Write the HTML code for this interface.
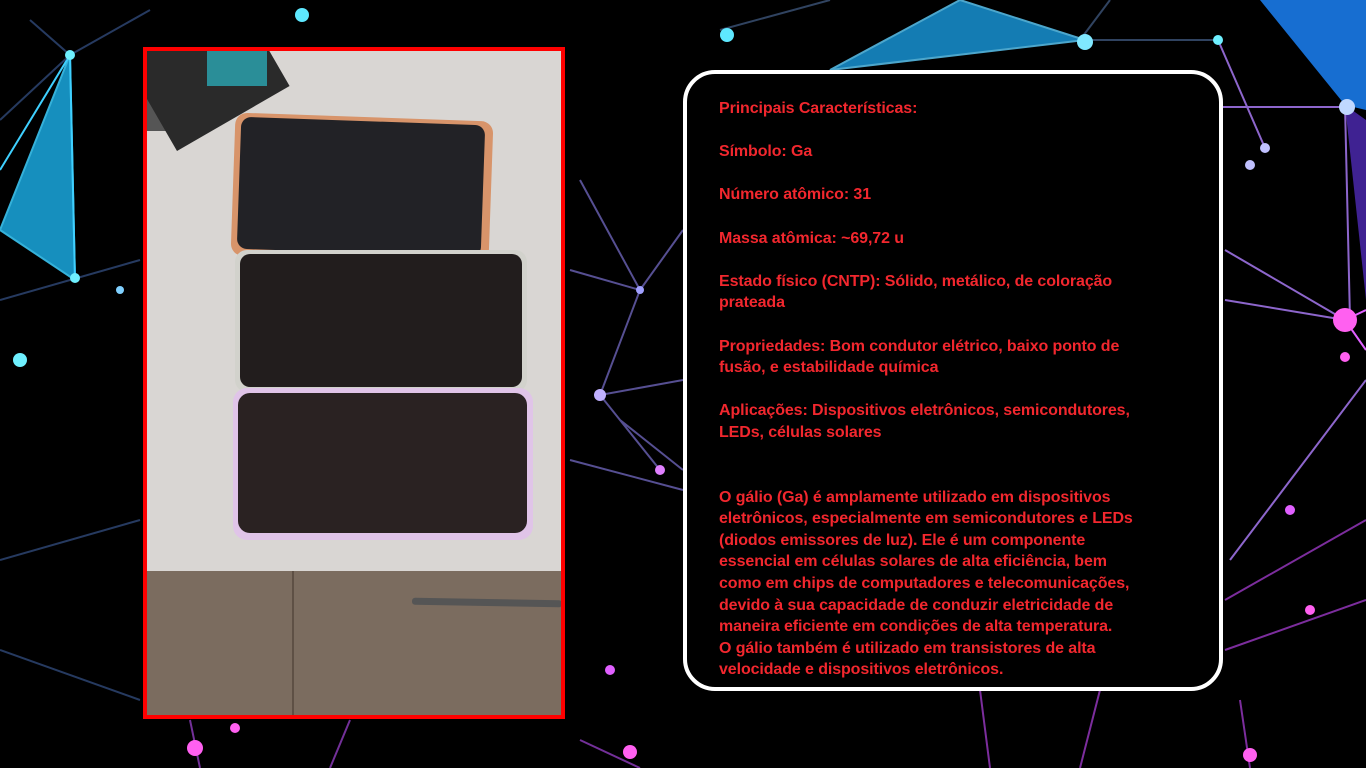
<!DOCTYPE html>
<html><head><meta charset="utf-8"><style>
html,body{margin:0;padding:0;width:1366px;height:768px;overflow:hidden;background:#000;}
.bg{position:absolute;left:0;top:0}
.frame{position:absolute;left:143px;top:47px;width:414px;height:664px;border:4px solid #f00;background:#d9d6d3;overflow:hidden}
.abs{position:absolute}
.card{position:absolute;left:683px;top:70px;width:532px;height:613px;border:4px solid #fff;border-radius:32px;background:#000;box-sizing:content-box}
.txt{position:absolute;left:32px;top:24px;width:470px;white-space:nowrap;font-family:"Liberation Sans",sans-serif;font-weight:bold;font-size:16px;line-height:21.6px;color:#f2272e;letter-spacing:-0.1px}
.txt p{margin:0 0 21.6px 0}
</style></head><body>
<svg class="bg" width="1366" height="768" viewBox="0 0 1366 768">
<g stroke-width="2" fill="none">
<path d="M0 230 L70 55 L75 280 Z" fill="#1aa8e0" stroke="#3fd0ff" opacity="0.85"/>
<path d="M0 170 L70 55 L75 280" stroke="#3fd0ff"/>
<path d="M830 70 L960 0 L1085 40 Z" fill="#1a9ce0" stroke="#5fd0ff" opacity="0.8"/>
<path d="M1260 0 L1366 0 L1366 110 L1345 105 Z" fill="#1a7ae8" opacity="0.9"/>
<path d="M1345 105 L1366 120 L1366 300 Z" fill="#5a30d0" opacity="0.7"/>
<path d="M1218 40 L1265 148 M1222 107 L1345 107 M1345 105 L1350 320 M1225 250 L1345 320 M1225 300 L1345 320 M1366 380 L1230 560" stroke="#b080ff" opacity="0.8"/>
<path d="M1345 320 L1366 310 M1345 320 L1366 350" stroke="#e060ff"/>
<path d="M580 180 L640 290 L600 395 L660 470 M640 290 L683 230 M570 270 L640 290 M600 395 L683 380 M570 460 L683 490 M620 420 L683 470" stroke="#7a70d0" opacity="0.7"/>
<path d="M0 300 L140 260 M30 20 L70 55 L150 10 M0 120 L70 55 M0 650 L140 700 M0 560 L140 520" stroke="#4060a0" opacity="0.6"/>
<path d="M720 30 L830 0 M1080 40 L1110 0 M1090 40 L1218 40" stroke="#5070a0" opacity="0.6"/>
<path d="M980 690 L990 768 M1100 690 L1080 768 M1240 700 L1250 768 M1225 600 L1366 520 M1225 650 L1366 600" stroke="#b040e0" opacity="0.7"/>
<path d="M190 720 L200 768 M350 720 L330 768 M580 740 L640 768" stroke="#c050ff" opacity="0.6"/>
</g>
<g>
<circle cx="70" cy="55" r="5" fill="#6ef0ff"/>
<circle cx="75" cy="278" r="5" fill="#6ef0ff"/>
<circle cx="20" cy="360" r="7" fill="#6ef0ff"/>
<circle cx="302" cy="15" r="7" fill="#5ee8ff"/>
<circle cx="727" cy="35" r="7" fill="#5ee8ff"/>
<circle cx="1085" cy="42" r="8" fill="#80e8ff"/>
<circle cx="1218" cy="40" r="5" fill="#6ef0ff"/>
<circle cx="1347" cy="107" r="8" fill="#c0d8ff"/>
<circle cx="1265" cy="148" r="5" fill="#c0c0ff"/>
<circle cx="1250" cy="165" r="5" fill="#c0c0ff"/>
<circle cx="1345" cy="320" r="12" fill="#ff60f0"/>
<circle cx="1345" cy="357" r="5" fill="#ff60f0"/>
<circle cx="600" cy="395" r="6" fill="#c0b0ff"/>
<circle cx="640" cy="290" r="4" fill="#a0a0ff"/>
<circle cx="660" cy="470" r="5" fill="#e080ff"/>
<circle cx="120" cy="290" r="4" fill="#80d0ff"/>
<circle cx="195" cy="748" r="8" fill="#ff60f0"/>
<circle cx="235" cy="728" r="5" fill="#ff60f0"/>
<circle cx="610" cy="670" r="5" fill="#e060ff"/>
<circle cx="630" cy="752" r="7" fill="#ff60f0"/>
<circle cx="1250" cy="755" r="7" fill="#ff60f0"/>
<circle cx="1310" cy="610" r="5" fill="#ff60f0"/>
<circle cx="1290" cy="510" r="5" fill="#e060ff"/>
</g>
</svg>

<div class="frame">
 <div class="abs" style="left:0;top:520px;width:414px;height:150px;background:#7b6c5f"></div>
 <div class="abs" style="left:145px;top:520px;width:2px;height:150px;background:#5e5045"></div>
 <div class="abs" style="left:265px;top:548px;width:150px;height:7px;background:#555;border-radius:3px;transform:rotate(1deg)"></div>
 <div class="abs" style="left:0;top:0;width:40px;height:80px;background:#555"></div>
 <div class="abs" style="left:30px;top:-30px;width:130px;height:130px;background:#2a2a2a;transform:rotate(-30deg);transform-origin:left bottom"></div>
 <div class="abs" style="left:60px;top:0;width:60px;height:35px;background:#2a8e98"></div>
 <div class="abs" style="left:86px;top:66px;width:258px;height:143px;background:#d8946a;border-radius:12px;transform:rotate(2deg)"></div>
 <div class="abs" style="left:92px;top:70px;width:244px;height:132px;background:#222226;border-radius:10px;transform:rotate(2deg)"></div>
 <div class="abs" style="left:88px;top:199px;width:292px;height:142px;background:#d2d2cc;border-radius:12px"></div>
 <div class="abs" style="left:93px;top:203px;width:282px;height:133px;background:#221d1d;border-radius:10px"></div>
 <div class="abs" style="left:86px;top:337px;width:300px;height:152px;background:#e0c4e8;border-radius:14px"></div>
 <div class="abs" style="left:91px;top:342px;width:289px;height:140px;background:#2a2222;border-radius:12px"></div>
</div>

<div class="card"><div class="txt">
<p>Principais Características:</p>
<p>Símbolo: Ga</p>
<p>Número atômico: 31</p>
<p>Massa atômica: ~69,72 u</p>
<p>Estado físico (CNTP): Sólido, metálico, de coloração<br>prateada</p>
<p>Propriedades: Bom condutor elétrico, baixo ponto de<br>fusão, e estabilidade química</p>
<p style="margin-bottom:43.2px">Aplicações: Dispositivos eletrônicos, semicondutores,<br>LEDs, células solares</p>
<p>O gálio (Ga) é amplamente utilizado em dispositivos<br>eletrônicos, especialmente em semicondutores e LEDs<br>(diodos emissores de luz). Ele é um componente<br>essencial em células solares de alta eficiência, bem<br>como em chips de computadores e telecomunicações,<br>devido à sua capacidade de conduzir eletricidade de<br>maneira eficiente em condições de alta temperatura.<br>O gálio também é utilizado em transistores de alta<br>velocidade e dispositivos eletrônicos.</p>
</div></div>
</body></html>
